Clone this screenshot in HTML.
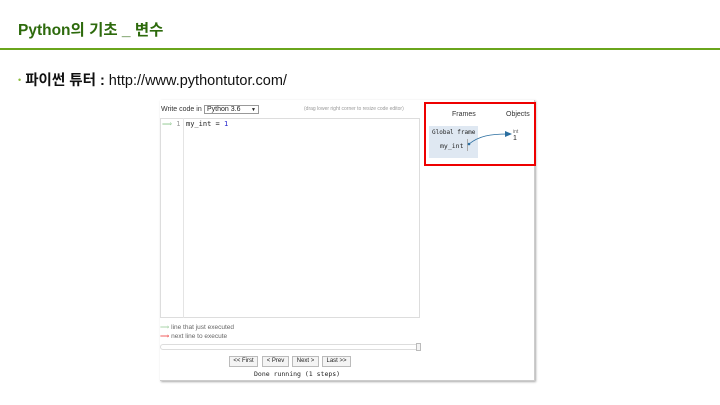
<!DOCTYPE html>
<html><head><meta charset="utf-8"><style>
*{margin:0;padding:0;box-sizing:border-box}
body{width:720px;height:405px;background:#fff;position:relative;overflow:hidden;font-family:"Liberation Sans","Noto Sans CJK KR",sans-serif}
.a{position:absolute}
.t{left:18px;top:18px;font-size:15.5px;font-weight:bold;color:#2d6a0c}
.line{left:0;top:48px;width:720px;height:2px;background:#6aa51c}
.b{left:18px;top:69px;font-size:14.5px;color:#111}
.f{font-family:"DejaVu Sans Mono","Liberation Mono",monospace}
.s{font-size:7px;color:#555}
.btn{position:absolute;top:356px;height:11px;border:1px solid #bbb;background:#f4f4f4;font-size:6px;line-height:9px;text-align:center;color:#222}
</style></head><body>
<div class="a t">Python의 기초 _ 변수</div>
<div class="a line"></div>
<div class="a b"><span style="color:#8bbb3a;font-size:9px;vertical-align:2px">•</span> <b>파이썬 튜터 :</b> http://www.pythontutor.com/</div>

<div class="a" style="left:160px;top:100px;width:375px;height:281px;background:#fff;box-shadow:1px 1px 2px #aaa;border-right:1px solid #ccc;border-bottom:1px solid #ccc"></div>
<div class="a s" style="left:161px;top:106px;color:#333">Write code in</div>
<div class="a s" style="left:204px;top:105px;width:55px;height:9px;border:1px solid #999;color:#222;padding-left:2px;line-height:8px">Python 3.6<span style="position:absolute;right:2px;font-size:5px">▼</span></div>
<div class="a" style="left:304px;top:106px;font-size:5px;color:#999">(drag lower right corner to resize code editor)</div>
<div class="a" style="left:160px;top:118px;width:260px;height:200px;border:1px solid #ddd"></div>
<div class="a" style="left:160px;top:118px;width:24px;height:200px;border-right:1px solid #e4e4e4"></div>
<div class="a f" style="left:162px;top:120px;font-size:7px;color:#999"><span style="color:#9c9">⟹</span> 1</div>
<div class="a f" style="left:186px;top:120px;font-size:7px;color:#222">my_int = <span style="color:#22c">1</span></div>

<div class="a" style="left:424px;top:102px;width:112px;height:64px;border:2px solid #e00"></div>
<div class="a s" style="left:452px;top:111px;color:#333">Frames</div>
<div class="a s" style="left:506px;top:111px;color:#333">Objects</div>
<div class="a" style="left:429px;top:126px;width:49px;height:32px;background:#dfe8f2"></div>
<div class="a f" style="left:432px;top:129px;font-size:6px;color:#222">Global frame</div>
<div class="a f" style="left:440px;top:142px;font-size:6.5px;color:#222">my_int</div>
<div class="a" style="left:467px;top:139px;width:1px;height:12px;background:#aaa"></div>
<div class="a" style="left:513px;top:129px;font-size:5px;color:#666">int</div>
<div class="a" style="left:513px;top:135px;font-size:7px;color:#222">1</div>
<svg class="a" style="left:465px;top:128px" width="50" height="20"><path d="M4 16 C14 8,25 6,43 6" fill="none" stroke="#2a6ea0" stroke-width="0.8"/><polygon points="40,3 47,6 40,9" fill="#2a6ea0"/><circle cx="4" cy="16" r="1.3" fill="#2a6ea0"/></svg>

<div class="a" style="left:160px;top:323px;font-size:6.5px;color:#666"><span style="color:#9c9">⟹</span> line that just executed</div>
<div class="a" style="left:160px;top:332px;font-size:6.5px;color:#666"><span style="color:#e33">⟹</span> next line to execute</div>
<div class="a" style="left:160px;top:344px;width:260px;height:6px;border:1px solid #ddd;border-radius:3px"></div>
<div class="a" style="left:416px;top:343px;width:5px;height:8px;border:1px solid #bbb;background:#f4f4f4"></div>
<div class="btn" style="left:229px;width:29px">&lt;&lt; First</div>
<div class="btn" style="left:262px;width:27px">&lt; Prev</div>
<div class="btn" style="left:292px;width:27px">Next &gt;</div>
<div class="btn" style="left:322px;width:29px">Last &gt;&gt;</div>
<div class="a f" style="left:254px;top:370px;font-size:6.5px;color:#222">Done running (1 steps)</div>
</body></html>
